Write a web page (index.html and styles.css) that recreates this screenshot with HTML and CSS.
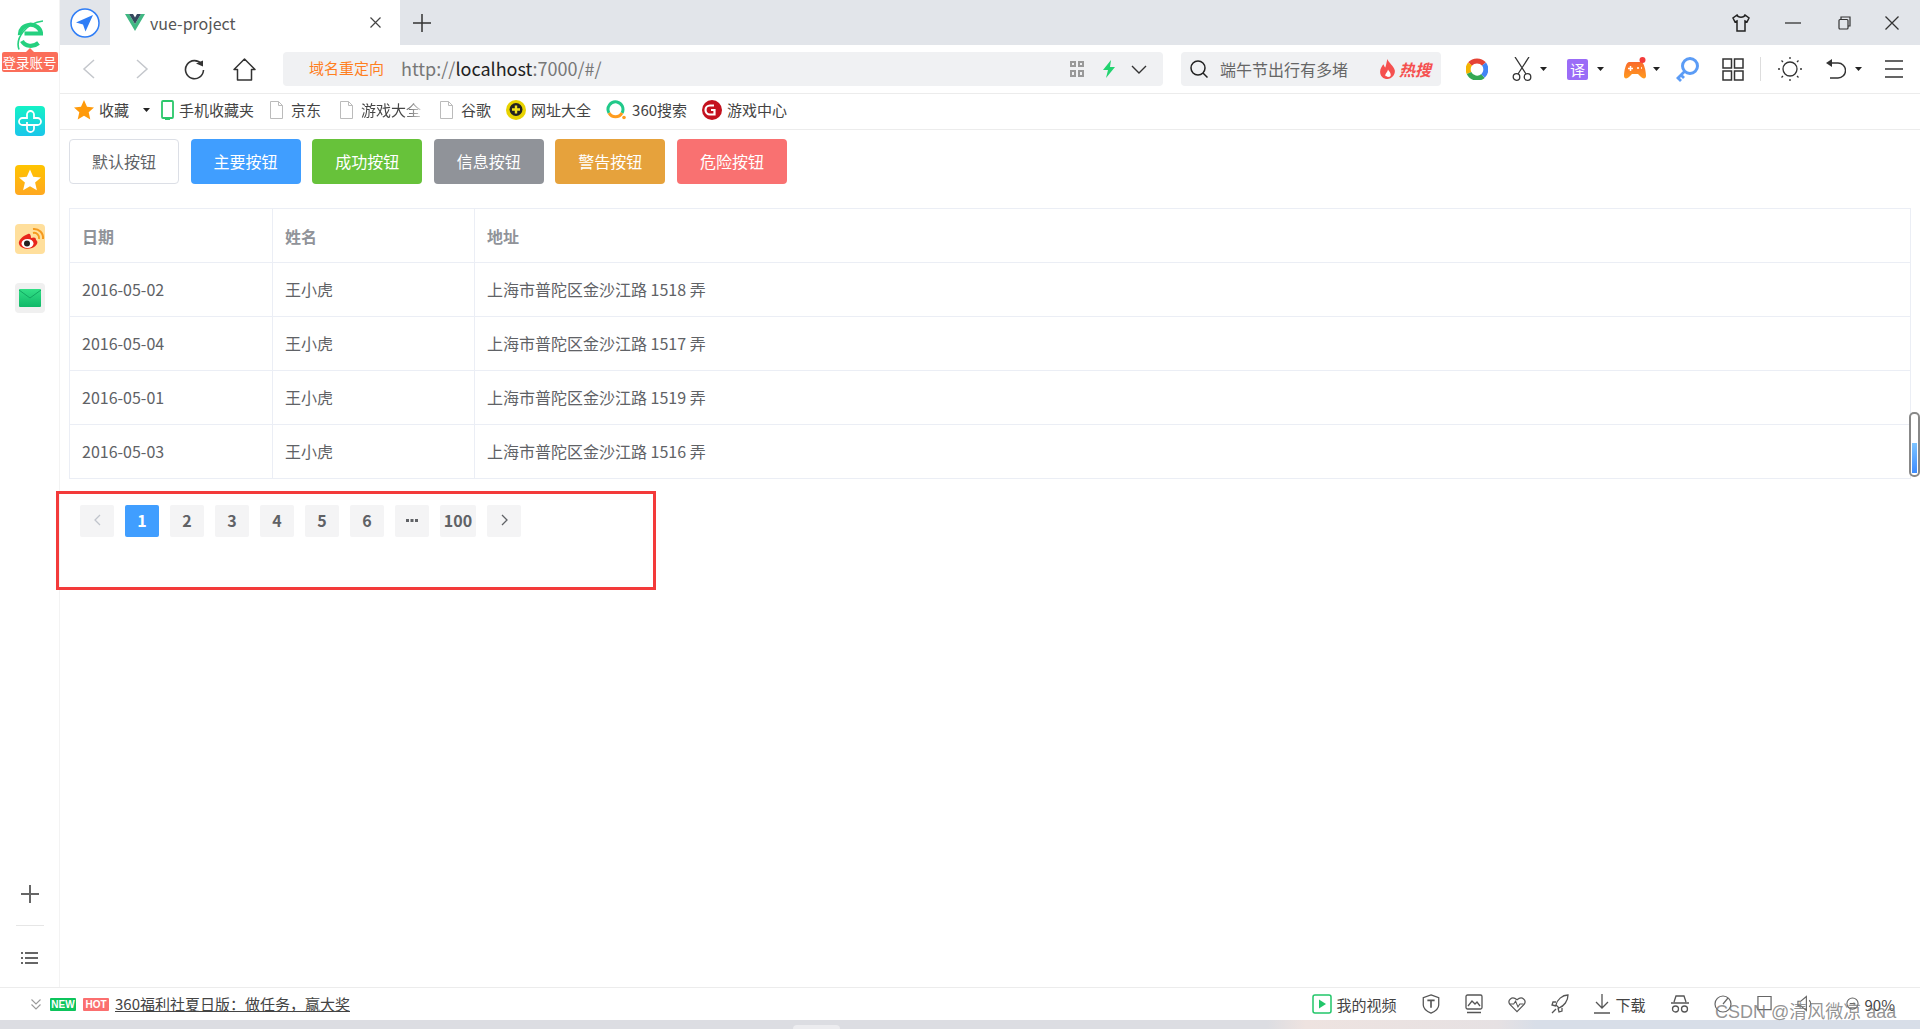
FILE: index.html
```html
<!DOCTYPE html>
<html lang="zh-CN">
<head>
<meta charset="utf-8">
<title>vue-project</title>
<link rel="stylesheet" href="styles.css">
</head>
<body>
<div class="app">
  <div class="main">
    <aside class="side">
      <svg class="side-logo" viewBox="0 0 26 30"><path d="M3 15a10.500 9.500 0 0 1 21-1.500H7.500" fill="none" stroke="#25d07f" stroke-width="4.200"/><path d="M5 21c3 5.500 11 6.500 16.500 2" fill="none" stroke="#25d07f" stroke-width="4.200"/><path d="M2 29.500C-2 18 9 3 26 1" fill="none" stroke="#25d07f" stroke-width="1.600"/></svg>
      <div class="side-login">登录账号</div>
      <svg class="tile" viewBox="0 0 30 30"><defs><linearGradient id="t1" x1="0" y1="0" x2="0" y2="1"><stop offset="0" stop-color="#15f2c6"/><stop offset="1" stop-color="#1ac6ea"/></linearGradient></defs><rect width="30" height="30" rx="4" fill="url(#t1)"/><path d="M12 13V8.500a3.500 3.500 0 0 1 7 0V12h3.500a3.500 3.500 0 0 1 0 7H19M12 12H7.500a3.500 3.500 0 0 0 0 7H19v3.500a3.500 3.500 0 0 1-7 0V16" fill="none" stroke="#fff" stroke-width="1.800"/></svg>
      <svg class="tile" viewBox="0 0 30 30"><defs><linearGradient id="t2" x1="0" y1="0" x2="0" y2="1"><stop offset="0" stop-color="#ffc400"/><stop offset="1" stop-color="#ffa820"/></linearGradient></defs><rect width="30" height="30" rx="4" fill="url(#t2)"/><path d="M15 4.500l3.200 7.200 7.800.8-5.900 5.100 1.800 7.700-6.900-4-6.900 4 1.800-7.700L4 12.500l7.800-.8z" fill="#fff"/></svg>
      <svg class="tile" viewBox="0 0 30 30"><rect width="30" height="30" rx="4" fill="#ffdf9c"/><path d="M13 10C7 12 3 17 4 20c1 4 8 6 13 4 5-2 7-6 4-8 0-3-2-3-5-2 0-3-1-5-3-4z" fill="#e8261c"/><ellipse cx="12.500" cy="19.500" rx="6" ry="4.500" fill="#fff"/><circle cx="12" cy="19.500" r="3" fill="#222"/><path d="M18 9a5 5 0 0 1 6 6M18 5a9 9 0 0 1 10 10" fill="none" stroke="#f59a1f" stroke-width="2"/></svg>
      <svg class="tile" viewBox="0 0 30 30"><defs><linearGradient id="t4" x1="0" y1="0" x2="0" y2="1"><stop offset="0" stop-color="#32df86"/><stop offset="1" stop-color="#10b868"/></linearGradient></defs><rect width="30" height="30" rx="4" fill="#f0f0f0"/><rect x="4" y="6" width="22" height="18" rx="1" fill="url(#t4)"/><path d="M4 7l11 8 11-8" fill="none" stroke="#12a862" stroke-width="1"/></svg>
      <div class="side-bottom">
        <svg class="side-plus" viewBox="0 0 18 18"><path d="M9 0v18M0 9h18" stroke="#666" stroke-width="2"/></svg>
        <div class="side-sep"></div>
        <svg class="side-list" viewBox="0 0 17 14"><path d="M4 2h13M4 7h13M4 12h13" stroke="#666" stroke-width="2"/><path d="M0 2h2M0 7h2M0 12h2" stroke="#666" stroke-width="2"/></svg>
      </div>
    </aside>
    <div class="browser">
      <div class="tabbar">
        <svg class="compass" viewBox="0 0 30 30"><circle cx="15" cy="15" r="14" fill="#fff" stroke="#2f7df6" stroke-width="1.500"/><path d="M23 7L6 14.500l7 2 2.500 7z" fill="#2f7df6"/></svg>
        <div class="tab">
          <svg class="vue" viewBox="0 0 20 17"><path d="M0 0h4l6 10L16 0h4L10 17z" fill="#41b883"/><path d="M4 0h4l2 3.500L12 0h4l-6 10z" fill="#35495e"/></svg>
          <span class="tab-title">vue-project</span>
          <svg class="tab-close" viewBox="0 0 11 11"><path d="M.5.500l10 10M10.500.5l-10 10" stroke="#444" stroke-width="1.200"/></svg>
        </div>
        <svg class="tab-new" viewBox="0 0 18 18"><path d="M9 0v18M0 9h18" stroke="#333" stroke-width="1.500"/></svg>
        <div class="win">
          <svg class="win-shirt" viewBox="0 0 18 18"><path d="M5 1L1 4l2 4 2-1v10h8V7l2 1 2-4-4-3c-1 3-7 3-8 0z" fill="none" stroke="#222" stroke-width="1.500"/></svg>
          <svg class="win-min" viewBox="0 0 16 2"><path d="M0 1h16" stroke="#333" stroke-width="1.300"/></svg>
          <svg class="win-max" viewBox="0 0 13 14"><path d="M3 3V1h9v9h-2" fill="none" stroke="#333" stroke-width="1.200"/><rect x="1" y="3.500" width="9" height="9.500" rx="1" fill="none" stroke="#333" stroke-width="1.200"/></svg>
          <svg class="win-close" viewBox="0 0 14 14"><path d="M.5.500l13 13M13.500.5l-13 13" stroke="#333" stroke-width="1.300"/></svg>
        </div>
      </div>
      <div class="toolbar">
        <svg class="t-back" viewBox="0 0 13 20"><path d="M12 1L2 10l10 9" fill="none" stroke="#c4c7cc" stroke-width="1.500"/></svg>
        <svg class="t-fwd" viewBox="0 0 13 20"><path d="M1 1l10 9-10 9" fill="none" stroke="#c4c7cc" stroke-width="1.500"/></svg>
        <svg class="t-reload" viewBox="0 0 21 21"><path d="M17.500 5A9 9 0 1 0 19.500 11" fill="none" stroke="#333" stroke-width="1.600"/><path d="M12 4.500l7-3v6z" fill="#333"/></svg>
        <svg class="t-home" viewBox="0 0 23 23"><path d="M1 11.500L11.500 1 22 11.500h-3.500V22h-14V11.500z" fill="none" stroke="#333" stroke-width="1.500" stroke-linejoin="round"/></svg>
        <div class="address">
          <span class="addr-note">域名重定向</span>
          <span class="addr-url">http://<b class="addr-host">localhost</b>:7000/#/</span>
          <svg class="addr-qr" viewBox="0 0 14 16"><path d="M1 1h4v4H1zM9 1h4v4H9zM1 10h4v5H1zM9 10h4v5H9z" fill="none" stroke="#999" stroke-width="2"/></svg>
          <svg class="addr-bolt" viewBox="0 0 12 18"><path d="M8 0L0 10h5l-2 8 9-11H7z" fill="#22d36f"/></svg>
          <svg class="addr-chev" viewBox="0 0 16 9"><path d="M1 1l7 7 7-7" fill="none" stroke="#333" stroke-width="1.400"/></svg>
        </div>
        <div class="search">
          <svg class="s-icon" viewBox="0 0 18 18"><circle cx="8" cy="8" r="7" fill="none" stroke="#222" stroke-width="1.500"/><path d="M13 13l4.500 4.500" stroke="#222" stroke-width="1.500"/></svg>
          <span class="s-text">端午节出行有多堵</span>
          <svg class="s-flame" viewBox="0 0 15 19"><path d="M7 0c1 4 6 6 7 11 .5 4-3 8-7 8s-7-3-7-7c0-3 2-5 3-7 1 1 1 3 2 3 1-3 1-5 2-8z" fill="#f5504f"/><path d="M7.500 10c1 2 3 3 2.500 6-.5 1.500-4 1.500-5 0-.5-2 2-3 2.500-6z" fill="#fff"/></svg>
          <span class="s-hot">热搜</span>
        </div>
        <svg class="t-ring" viewBox="0 0 22 22"><g fill="none" stroke-width="5"><path d="M4 6a9 8 0 0 1 14 0" stroke="#e54335"/><path d="M4 6a9 9 0 0 0-1 9" stroke="#f4b400"/><path d="M3 15a9 9 0 0 0 14 3" stroke="#34a853"/><path d="M17 18a9 9 0 0 0 1-12" stroke="#4285f4"/></g></svg>
        <svg class="t-scis" viewBox="0 0 20 24"><path d="M3 0l11 17M17 0L6 17" stroke="#333" stroke-width="1.300" fill="none"/><circle cx="4.500" cy="20" r="3.300" fill="none" stroke="#333" stroke-width="1.300"/><circle cx="15.500" cy="20" r="3.300" fill="none" stroke="#333" stroke-width="1.300"/></svg>
        <svg class="caret c-scis" viewBox="0 0 7 4"><path d="M0 0h7L3.500 4z" fill="#222"/></svg>
        <span class="t-trans">译</span>
        <svg class="caret c-trans" viewBox="0 0 7 4"><path d="M0 0h7L3.500 4z" fill="#222"/></svg>
        <svg class="t-game" viewBox="0 0 24 24"><defs><linearGradient id="g1" x1="0" y1="0" x2="0" y2="1"><stop offset="0" stop-color="#f96a2c"/><stop offset="1" stop-color="#ff9a1f"/></linearGradient></defs><path d="M6 5h12c3 0 5 9 5 14 0 3-3 3-5 1l-3-3H9l-3 3c-2 2-5 2-5-1C1 14 3 5 6 5z" fill="url(#g1)"/><path d="M5 11.500h5M7.500 9v5M14 11h2M18 11h1" stroke="#fff" stroke-width="1.500"/><circle cx="19.500" cy="3" r="3" fill="#f33b3b"/></svg>
        <svg class="caret c-game" viewBox="0 0 7 4"><path d="M0 0h7L3.500 4z" fill="#222"/></svg>
        <svg class="t-key" viewBox="0 0 24 25"><circle cx="15" cy="9" r="7.500" fill="none" stroke="#5b9cf6" stroke-width="3"/><path d="M9.500 14.500L2 22M3 21l3 3M6 18l3 3" fill="none" stroke="#5b9cf6" stroke-width="2.800"/></svg>
        <svg class="t-grid" viewBox="0 0 22 23"><path d="M1 1h8.500v9H1zM12.500 1H21v9h-8.500zM1 13h8.500v9H1zM12.500 13H21v9h-8.500z" fill="none" stroke="#333" stroke-width="1.500"/></svg>
        <div class="t-sep"></div>
        <svg class="t-sun" viewBox="0 0 24 24"><circle cx="12" cy="12" r="7" fill="none" stroke="#333" stroke-width="1.300"/><path d="M12 0v2M12 22v2M0 12h2M22 12h2M3.500 3.500l1.500 1.500M19 19l1.500 1.500M3.500 20.500L5 19M19 5l1.500-1.500" stroke="#333" stroke-width="1.300"/></svg>
        <svg class="t-undo" viewBox="0 0 20 22"><path d="M4 5h8a7.500 7.500 0 0 1 0 15H4" fill="none" stroke="#333" stroke-width="1.400"/><path d="M0 5l6-4v8z" fill="#333"/></svg>
        <svg class="caret c-undo" viewBox="0 0 7 4"><path d="M0 0h7L3.500 4z" fill="#222"/></svg>
        <svg class="t-menu" viewBox="0 0 18 18"><path d="M0 1h18M0 9h18M0 17h18" stroke="#333" stroke-width="1.400"/></svg>
      </div>
      <div class="bookmarks">
        <div class="bm bm-fav">
          <svg class="bm-star" viewBox="0 0 20 20"><path d="M10 0l3 6.800 7 .7-5.300 4.700 1.600 7.300L10 15.800 3.700 19.500l1.600-7.300L0 7.500l7-.7z" fill="#ff9a0a"/></svg>
          <span>收藏</span>
        </div>
        <svg class="caret bm-caret" viewBox="0 0 7 4"><path d="M0 0h7L3.500 4z" fill="#222"/></svg>
        <div class="bm bm-phone">
          <svg class="bm-ph" viewBox="0 0 13 20"><rect x="1" y="1" width="11" height="17" rx="1" fill="#fff" stroke="#2bc76a" stroke-width="1.800"/><path d="M4 19h5v1H4z" fill="#2bc76a"/></svg>
          <span>手机收藏夹</span>
        </div>
        <div class="bm bm-d1">
          <svg class="bm-doc" viewBox="0 0 13 18"><path d="M.5.500h8l4 4v13H.5z" fill="#fff" stroke="#bbb"/><path d="M8.500.5v4h4" fill="none" stroke="#bbb"/></svg>
          <span>京东</span>
        </div>
        <div class="bm bm-d2">
          <svg class="bm-doc" viewBox="0 0 13 18"><path d="M.5.500h8l4 4v13H.5z" fill="#fff" stroke="#bbb"/><path d="M8.500.5v4h4" fill="none" stroke="#bbb"/></svg>
          <span class="bm-fade">游戏大全</span>
        </div>
        <div class="bm bm-d2">
          <svg class="bm-doc" viewBox="0 0 13 18"><path d="M.5.500h8l4 4v13H.5z" fill="#fff" stroke="#bbb"/><path d="M8.500.5v4h4" fill="none" stroke="#bbb"/></svg>
          <span>谷歌</span>
        </div>
        <div class="bm bm-icon">
          <svg class="bm-round" viewBox="0 0 20 20"><circle cx="10" cy="10" r="10" fill="#e8d300"/><path d="M3 14a9 9 0 0 0 14 3 9 9 0 0 1-14-3z" fill="#2eae3c"/><circle cx="10" cy="9.500" r="6.500" fill="#222"/><path d="M10 5.500v8M6 9.500h8" stroke="#f2e21c" stroke-width="2.400"/></svg>
          <span>网址大全</span>
        </div>
        <div class="bm bm-icon bm-360">
          <svg class="bm-round" viewBox="0 0 20 20"><path d="M3 13a7.500 7.500 0 0 1 8-11 7.500 7.500 0 0 1 5 11" fill="none" stroke="#21c98a" stroke-width="3"/><path d="M3 13a7.500 7.500 0 0 0 13 0" fill="none" stroke="#ff9c1f" stroke-width="3"/><circle cx="18" cy="17.500" r="1.800" fill="#ff9c1f"/></svg>
          <span>360搜索</span>
        </div>
        <div class="bm bm-icon">
          <svg class="bm-round" viewBox="0 0 20 20"><circle cx="10" cy="10" r="10" fill="#c4111e"/><path d="M12 5.500H8a4.500 4.500 0 0 0 0 9h4.500V10H9" fill="none" stroke="#fff" stroke-width="2.200"/></svg>
          <span>游戏中心</span>
        </div>
      </div>
      <div class="content">
        <div class="buttons">
          <button class="btn btn-default">默认按钮</button>
          <button class="btn btn-primary">主要按钮</button>
          <button class="btn btn-success">成功按钮</button>
          <button class="btn btn-info">信息按钮</button>
          <button class="btn btn-warning">警告按钮</button>
          <button class="btn btn-danger">危险按钮</button>
        </div>
        <table class="data">
          <colgroup><col class="col-date"><col class="col-name"><col></colgroup>
          <thead><tr><th>日期</th><th>姓名</th><th>地址</th></tr></thead>
          <tbody>
            <tr><td>2016-05-02</td><td>王小虎</td><td>上海市普陀区金沙江路 1518 弄</td></tr>
            <tr><td>2016-05-04</td><td>王小虎</td><td>上海市普陀区金沙江路 1517 弄</td></tr>
            <tr><td>2016-05-01</td><td>王小虎</td><td>上海市普陀区金沙江路 1519 弄</td></tr>
            <tr><td>2016-05-03</td><td>王小虎</td><td>上海市普陀区金沙江路 1516 弄</td></tr>
          </tbody>
        </table>
        <div class="annot">
          <div class="pager">
            <span class="pg pg-off"><svg class="pg-arrow" viewBox="0 0 7 12"><path d="M6 1L1 6l5 5" fill="none" stroke="currentColor" stroke-width="1.300"/></svg></span>
            <span class="pg pg-on">1</span>
            <span class="pg">2</span>
            <span class="pg">3</span>
            <span class="pg">4</span>
            <span class="pg">5</span>
            <span class="pg">6</span>
            <span class="pg"><svg class="pg-more" viewBox="0 0 12 3"><path d="M0 0h3v3H0zM4.500 0h3v3h-3zM9 0h3v3H9z" fill="currentColor"/></svg></span>
            <span class="pg pg-wide">100</span>
            <span class="pg"><svg class="pg-arrow" viewBox="0 0 7 12"><path d="M1 1l5 5-5 5" fill="none" stroke="currentColor" stroke-width="1.300"/></svg></span>
          </div>
        </div>
        <div class="thumb"><div class="thumb-fill"></div></div>
      </div>
    </div>
  </div>
  <footer class="status">
    <div class="st-left">
      <svg class="st-chev" viewBox="0 0 10 11"><path d="M.5.500L5 5 9.500.5M.5 5.500L5 10l4.500-4.500" fill="none" stroke="#999" stroke-width="1.100"/></svg>
      <span class="badge badge-new">NEW</span>
      <span class="badge badge-hot">HOT</span>
      <span class="st-news">360福利社夏日版：做任务，赢大奖</span>
    </div>
    <div class="st-right">
      <div class="st-item st-video">
        <svg class="st-play" viewBox="0 0 20 20"><rect x="1" y="1" width="18" height="18" rx="2" fill="none" stroke="#22c66a" stroke-width="1.500"/><path d="M7 5.500l7 4.500-7 4.500z" fill="#22c66a"/></svg>
        <span>我的视频</span>
      </div>
      <svg class="st-ic" viewBox="0 0 19 22"><path d="M9.500 1L18 4v8c0 4-4 7-8.500 9C5 19 1 16 1 12V4z" fill="none" stroke="#555" stroke-width="1.400"/><path d="M5.500 7h8M9.500 7v8" stroke="#555" stroke-width="1.800"/></svg>
      <svg class="st-ic" viewBox="0 0 18 20"><rect x="1" y="1" width="16" height="14" rx="1.500" fill="none" stroke="#555" stroke-width="1.300"/><path d="M3 12l4-5 3 3 2-2 3 4M2 18.500h14" fill="none" stroke="#555" stroke-width="1.300"/></svg>
      <svg class="st-ic" viewBox="0 0 19 18"><path d="M9.500 17L2 9.500C-1 5 4 0 9.500 4.500 15 0 20 5 17 9.500z" fill="none" stroke="#555" stroke-width="1.300"/><path d="M2 9h4l2-3 2.500 6 2-3h4" fill="none" stroke="#555" stroke-width="1.100"/></svg>
      <svg class="st-ic" viewBox="0 0 18 20"><path d="M17 1C11 1 6 6 5 11l3 3c5-2 9-7 9-13zM5 8H2L1 11l4 1M11 14v3l-3 1-1-4M1 19l4-4" fill="none" stroke="#555" stroke-width="1.300"/></svg>
      <div class="st-item st-down">
        <svg class="st-dl" viewBox="0 0 16 20"><path d="M8 0v14M2 8l6 6 6-6M0 19h16" fill="none" stroke="#555" stroke-width="1.300"/></svg>
        <span>下载</span>
      </div>
      <svg class="st-ic" viewBox="0 0 18 18"><path d="M3 7l2-6h8l2 6M0 8h18" fill="none" stroke="#555" stroke-width="1.300"/><rect x="1.500" y="11" width="6" height="6" rx="3" fill="none" stroke="#555" stroke-width="1.300"/><rect x="10.500" y="11" width="6" height="6" rx="3" fill="none" stroke="#555" stroke-width="1.300"/></svg>
      <svg class="st-ic" viewBox="0 0 18 18"><circle cx="9" cy="9" r="8" fill="none" stroke="#666" stroke-width="1.200"/><path d="M9 9l5-6" stroke="#666" stroke-width="1.200"/></svg>
      <svg class="st-ic st-win" viewBox="0 0 16 18"><path d="M1 1h14v14H1z" fill="none" stroke="#666" stroke-width="1.300"/></svg>
      <svg class="st-ic st-win" viewBox="0 0 16 18"><path d="M1 6h3l6-5v15l-6-5H1zM13 5c2 2 2 5 0 7" fill="none" stroke="#666" stroke-width="1.200"/></svg>
      <div class="st-item st-zoom">
        <svg class="st-mag" viewBox="0 0 14 16"><circle cx="7" cy="7" r="6" fill="none" stroke="#666" stroke-width="1.200"/><path d="M4 7h6" stroke="#666" stroke-width="1.200"/></svg>
        <span>90%</span>
      </div>
    </div>
  </footer>
  <div class="strip"><div class="strip-tab"></div></div>
  <div class="watermark">CSDN @清风微凉 aaa</div>
</div>
</body>
</html>
```
FILE: styles.css
```css
* { box-sizing: border-box; }
html, body { margin: 0; padding: 0; height: 100%; overflow: hidden; background: #fff; }
body { font-family: "Noto Sans CJK SC", "Noto Sans", sans-serif; color: #333; }
svg { display: block; flex: none; }

.app { position: relative; width: 1920px; height: 1029px; display: flex; flex-direction: column; overflow: hidden; }
.main { display: flex; height: 987px; }

/* sidebar */
.side { width: 60px; flex: none; border-right: 1px solid #f3f3f3; display: flex; flex-direction: column; align-items: center; padding-top: 20px; background: #fff; }
.side-logo { width: 26px; height: 30px; }
.side-login { position: relative; width: 56px; height: 20px; margin-top: 2px; margin-bottom: 34px; background: #fb6e5a; color: #fff; border-radius: 2px; font-size: 13.500px; line-height: 20px; text-align: center; white-space: nowrap; }
.side-login::before { content: ""; position: absolute; left: 24px; top: -4px; border: 4px solid transparent; border-top: 0; border-bottom-color: #fb6e5a; }
.tile { width: 30px; height: 30px; margin-bottom: 29px; }
.side-bottom { margin-top: auto; padding-bottom: 22px; display: flex; flex-direction: column; align-items: center; }
.side-plus { width: 18px; height: 18px; }
.side-sep { width: 28px; height: 1px; background: #e6e6e6; margin: 22px 0 25px; }
.side-list { width: 17px; height: 14px; }

.browser { flex: 1; min-width: 0; display: flex; flex-direction: column; }

/* tab bar */
.tabbar { height: 45px; flex: none; background: #e2e5ea; display: flex; align-items: center; }
.compass { width: 30px; height: 30px; margin-left: 10px; }
.tab { width: 290px; height: 45px; margin-left: 10px; background: #fff; display: flex; align-items: center; padding-left: 15px; }
.vue { width: 20px; height: 17px; }
.tab-title { margin-left: 5px; font-size: 16px; color: #555; width: 220px; }
.tab-close { width: 11px; height: 11px; }
.tab-new { width: 18px; height: 18px; margin-left: 13px; }
.win { margin-left: auto; display: flex; align-items: center; padding-right: 21px; }
.win-shirt { width: 18px; height: 18px; }
.win-min { width: 16px; height: 2px; margin-left: 35px; }
.win-max { width: 13px; height: 14px; margin-left: 37px; }
.win-close { width: 14px; height: 14px; margin-left: 34px; }

/* tool bar */
.toolbar { height: 49px; flex: none; border-bottom: 1px solid #ececec; display: flex; align-items: center; }
.t-back { width: 13px; height: 20px; margin-left: 22px; }
.t-fwd { width: 13px; height: 20px; margin-left: 41px; }
.t-reload { width: 21px; height: 21px; margin-left: 35px; }
.t-home { width: 23px; height: 23px; margin-left: 28px; }
.address { width: 880px; height: 34px; margin-left: 27px; background: #f0f1f3; border-radius: 4px; display: flex; align-items: center; padding-left: 26px; }
.addr-note { font-size: 15px; line-height: 20px; padding-bottom: 2px; color: #ff7f1f; }
.addr-url { margin-left: 17px; font-size: 18px; line-height: 24px; padding-bottom: 2px; color: #777; width: 669px; white-space: nowrap; }
.addr-host { font-weight: 400; color: #222; }
.addr-qr { width: 14px; height: 16px; }
.addr-bolt { width: 12px; height: 18px; margin-left: 19px; }
.addr-chev { width: 16px; height: 9px; margin-left: 16px; }
.search { width: 260px; height: 34px; margin-left: 18px; background: #f0f1f3; border-radius: 4px; display: flex; align-items: center; padding-left: 9px; }
.s-icon { width: 18px; height: 18px; }
.s-text { margin-left: 12px; font-size: 16px; line-height: 20px; color: #666; width: 159px; white-space: nowrap; }
.s-flame { width: 18px; height: 20px; }
.s-hot { margin-left: 2px; font-size: 16px; font-weight: 700; font-style: italic; color: #f5504f; white-space: nowrap; }
.t-ring { width: 22px; height: 22px; margin-left: 25px; }
.t-scis { width: 20px; height: 24px; margin-left: 24px; }
.caret { width: 7px; height: 4px; }
.c-scis { margin-left: 8px; }
.t-trans { width: 21px; height: 21px; margin-left: 20px; background: #9b6cf7; border-radius: 2px; color: #fff; font-size: 15px; line-height: 21px; text-align: center; }
.c-trans { margin-left: 9px; }
.t-game { width: 24px; height: 24px; margin-left: 19px; }
.c-game { margin-left: 6px; }
.t-key { width: 24px; height: 25px; margin-left: 15px; }
.t-grid { width: 22px; height: 23px; margin-left: 23px; }
.t-sep { width: 1px; height: 24px; background: #ddd; margin-left: 16px; }
.t-sun { width: 24px; height: 24px; margin-left: 17px; }
.t-undo { width: 20px; height: 22px; margin-left: 24px; }
.c-undo { margin-left: 9px; }
.t-menu { width: 18px; height: 18px; margin-left: 23px; }

/* bookmarks */
.bookmarks { height: 36px; flex: none; border-bottom: 1px solid #ececec; padding-bottom: 3px; display: flex; align-items: center; font-size: 15px; color: #444; white-space: nowrap; }
.bm { display: flex; align-items: center; line-height: 20px; }
.bm-fav { margin-left: 14px; gap: 5px; }
.bm-star { width: 20px; height: 20px; }
.bm-caret { margin-left: 14px; }
.bm-phone { margin-left: 11px; gap: 5px; }
.bm-ph { width: 13px; height: 20px; }
.bm-d1 { margin-left: 16px; gap: 8px; }
.bm-d2 { margin-left: 19px; gap: 8px; }
.bm-doc { width: 13px; height: 18px; }
.bm-fade { background: linear-gradient(to right, #444 70%, #ccc 100%); -webkit-background-clip: text; background-clip: text; color: transparent; }
.bm-icon { margin-left: 15px; gap: 5px; }
.bm-360 { gap: 6px; }
.bm-round { width: 20px; height: 20px; }

/* page content */
.content { position: relative; flex: 1; padding: 9px 9px 0; }
.buttons { display: flex; gap: 11.600px; margin-bottom: 24px; }
.btn { width: 110px; height: 45px; padding: 0 0 2px; border: 1px solid transparent; border-radius: 4px; font-family: inherit; font-size: 16px; color: #fff; }
.btn-default { background: #fff; border-color: #dcdfe6; color: #606266; }
.btn-primary { background: #409eff; }
.btn-success { background: #67c23a; }
.btn-info { background: #909399; }
.btn-warning { background: #e6a23c; }
.btn-danger { background: #f97171; }

.data { width: 1842px; table-layout: fixed; border-collapse: collapse; font-size: 16px; color: #606266; }
.col-date { width: 203px; }
.col-name { width: 202px; }
.data th, .data td { height: 54px; padding: 0 12px 2px; border: 1px solid #ebeef5; text-align: left; }
.data th { color: #909399; font-weight: 700; padding-bottom: 0; }

.annot { width: 600px; height: 99px; margin: 12px 0 0 -13px; border: 3px solid #f33a3a; padding: 11px 0 0 21px; }
.pager { display: flex; gap: 11px; }
.pg { width: 34px; height: 32px; padding-bottom: 2px; background: #f4f4f5; border-radius: 2px; color: #606266; font-size: 16px; font-weight: 700; line-height: 30px; display: flex; align-items: center; justify-content: center; }
.pg-on { background: #409eff; color: #fff; }
.pg-off { color: #c0c4cc; }
.pg-wide { width: 36px; }
.pg-arrow { width: 7px; height: 12px; }
.pg-more { width: 12px; height: 3px; }

.thumb { position: absolute; right: 0; top: 282px; width: 11px; height: 65px; border: 2px solid #888; border-radius: 5px; background: #fff; padding: 29px 1px 1px; }
.thumb-fill { height: 30px; background: linear-gradient(#7dc4ff, #3d8cff); }

/* status bar */
.status { height: 33px; flex: none; border-top: 1px solid #ececec; display: flex; align-items: center; justify-content: space-between; font-size: 15px; color: #444; white-space: nowrap; }
.st-left { display: flex; align-items: center; padding-left: 31px; }
.st-chev { width: 10px; height: 11px; }
.badge { width: 26px; height: 13px; margin-left: 9px; border-radius: 1px; color: #fff; font-size: 10px; font-weight: 700; line-height: 13px; text-align: center; font-family: "Liberation Sans", sans-serif; }
.badge-new { background: #0dc45c; }
.badge-hot { background: #fb6f6f; margin-left: 7px; }
.st-news { margin-left: 6px; text-decoration: underline; line-height: 20px; }
.st-right { display: flex; align-items: center; gap: 25px; padding-right: 25px; }
.st-item { display: flex; align-items: center; gap: 5px; }
.st-play { width: 20px; height: 20px; }
.st-ic { width: 18px; height: 20px; }
.st-win { width: 15px; }
.st-dl { width: 16px; height: 20px; }
.st-down { gap: 6px; }
.st-zoom { margin-left: 9px; gap: 6px; }
.st-mag { width: 13px; height: 15px; }

.strip { position: relative; height: 9px; flex: none; background: linear-gradient(to right, #dcdde2 0, #dcdde2 66%, #eee3e0 68%, #e6e1e3 78%, #d8dee8 80%, #d8dee8 100%); }
.strip-tab { position: absolute; left: 793px; bottom: 0; width: 47px; height: 4px; background: #ececef; border-radius: 4px 4px 0 0; }
.watermark { position: absolute; left: 1715px; top: 997px; font-family: "Liberation Sans", "Noto Sans CJK SC", sans-serif; font-size: 18px; line-height: 30px; color: rgba(120, 120, 120, .8); white-space: nowrap; }
```
